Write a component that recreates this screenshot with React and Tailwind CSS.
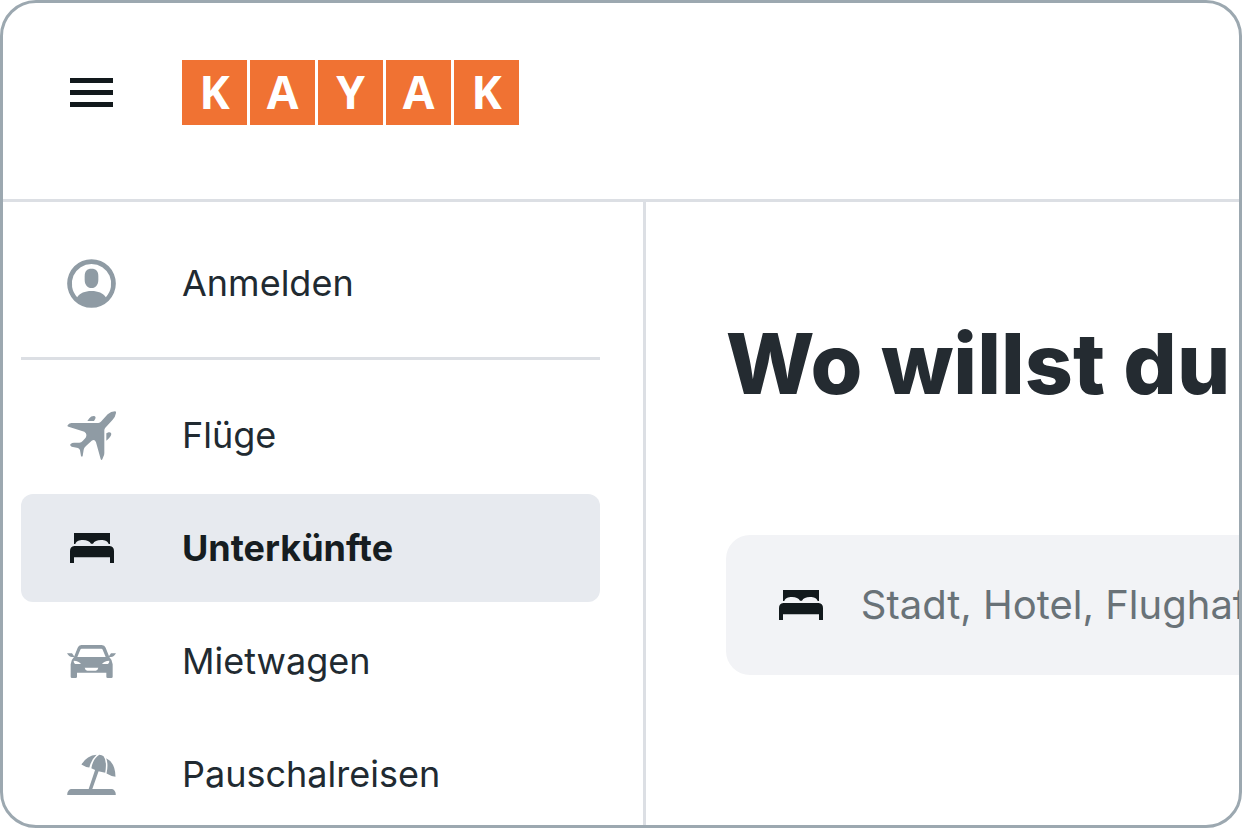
import React from 'react';

function UserIcon() {
  return (
    <svg viewBox="51 38 147 147" className="h-[49px] w-[49px]" fill="currentColor" aria-hidden="true">
      <path
        fillRule="evenodd"
        d="M124.500 38.500a73 73 0 1 0 0 146a73 73 0 1 0 0-146zM124.500 53a59 59 0 0 1 43 99.500c-8-12-23-18.500-43-18.500s-35 6.500-43 18.500a59 59 0 0 1 43-99.500z"
      />
      <path d="M124.500 67c14 0 20.500 8 20.500 22v11c0 15-8 25-20.500 25s-20.500-10-20.500-25V89c0-14 6.500-22 20.500-22z" />
    </svg>
  );
}

function PlaneIcon() {
  return (
    <svg viewBox="51 32 147 147" className="h-[49px] w-[49px]" fill="currentColor" aria-hidden="true">
      <path d="M52 76Q56 68 64 68L145 68Q150 68 154 63L173 42Q183 33 195 33Q199 33 198 38Q196 50 188 58L166 82Q163 86 163 90L163 158Q163 164 160 169L157 177Q154 181 152 176L138 126Q134 115 125 121L108 137Q102 142 101 148L98 167Q96 172 93 167L90 150Q89 145 84 143L65 139Q58 136 62 131Q66 127 72 127L88 127Q94 127 98 122L107 112Q113 100 103 94L58 80Q52 79 52 76z" />
      <path d="M112 62L118 54Q124 46 133 47Q139 49 136 55L132 62zM169 121V99L176 96Q184 95 184 101Q183 109 177 114z" />
    </svg>
  );
}

function BedIcon() {
  return (
    <svg viewBox="59 40 132 90" className="h-[30px] w-11" fill="currentColor" aria-hidden="true">
      <path d="M71 40h108v33h-4c-2-8-11-12-23-12c-12 0-20 4-24 11h-6c-4-7-12-11-24-11s-21 4-23 12h-4z" />
      <path d="M72 79h106q13 2 13 15v36h-12v-17H71v17H59V94q0-13 13-15z" />
    </svg>
  );
}

function CarIcon() {
  return (
    <svg viewBox="51 30 147 99" className="h-[33px] w-[49px]" fill="currentColor" aria-hidden="true">
      <path
        fillRule="evenodd"
        d="M94 30h61q9 0 12 8l11 28q10 10 10 22v37q0 4-4 4h-11q-4 0-4-4v-12H81v12q0 4-4 4H66q-4 0-4-4V88q0-12 10-22l11-28q3-8 11-8zM95 41q-3 0-4 3l-9 22h85l-9-22q-1-3-4-3zM71 77q0 10 8 10h14q-6-9-22-10zM178 77q-16 1-22 10h14q8 0 8-10zM104 98q2 9 8 9h25q6 0 8-9z"
      />
      <path d="M51 55h15l8 11h-8q-9 0-15-11zM198 55h-15l-8 11h8q9 0 15-11z" />
    </svg>
  );
}

function BeachIcon() {
  return (
    <svg viewBox="51 40 147 124" className="h-[41px] w-[49px]" fill="currentColor" aria-hidden="true">
      <path d="M94 72q16-28 46-30q-16 14-22 39q-12-1-24-9zM124 83q5-29 24-41q8 0 13 5q11 13 5 50q-22-2-42-14zM170 99q6-28-1-46q28 14 28 56q-14-2-27-10z" />
      <path d="M136 86l11 3-20 57h-11zM62 146h125q11 4 11 18H51q0-14 11-18z" />
    </svg>
  );
}

function NavItem({ icon, label, active }) {
  return (
    <a
      href="#"
      aria-current={active ? 'page' : undefined}
      className={
        active
          ? 'flex h-[108px] shrink-0 items-center gap-[66px] rounded-xl bg-[#e7eaef] pr-6 pl-[46px] font-bold text-[#161d21]'
          : 'flex h-[108px] shrink-0 items-center gap-[66px] rounded-xl pr-6 pl-[46px] text-[#212a31]'
      }
    >
      <span className={active ? 'flex w-[49px] justify-center text-[#12191c]' : 'flex w-[49px] justify-center text-[#8f9ba4]'}>
        {icon}
      </span>
      <span className="text-4xl">{label}</span>
    </a>
  );
}

const links = [
  { label: 'Flüge', icon: <PlaneIcon /> },
  { label: 'Unterkünfte', icon: <BedIcon />, active: true },
  { label: 'Mietwagen', icon: <CarIcon /> },
  { label: 'Pauschalreisen', icon: <BeachIcon /> },
];

export default function App() {
  return (
    <div className="h-screen bg-white font-['Inter',sans-serif]">
      <div className="flex h-full flex-col overflow-hidden rounded-[36px] border-[3px] border-[#9ca8b0] bg-white">
        <header className="flex shrink-0 items-start gap-[69px] border-b-[3px] border-[#dcdfe4] pt-[57px] pb-[74px] pl-[67px]">
          <button type="button" aria-label="Menü" className="flex h-[65px] w-[43px] flex-col justify-center gap-[7px]">
            <span className="h-[5px] w-full bg-[#12191c]" />
            <span className="h-[5px] w-full bg-[#12191c]" />
            <span className="h-[5px] w-full bg-[#12191c]" />
          </button>
          <a href="#" aria-label="KAYAK" className="flex gap-[3px] font-['Open_Sans',sans-serif] text-[46px] leading-none font-bold text-white">
            {['K', 'A', 'Y', 'A', 'K'].map((letter, i) => (
              <span key={i} className="flex h-[65px] w-[65px] items-center justify-center bg-[#f07233] pb-1">
                {letter}
              </span>
            ))}
          </a>
        </header>
        <div className="flex min-h-0 flex-1">
          <nav className="flex w-[52%] shrink-0 flex-col overflow-hidden border-r-[3px] border-[#dcdfe4] pt-[27px] pr-[43px] pl-[18px]">
            <NavItem icon={<UserIcon />} label="Anmelden" />
            <hr className="mt-5 mb-[21px] shrink-0 border-t-[3px] border-[#dcdfe4]" />
            <div className="flex flex-col gap-[5px]">
              {links.map((link) => (
                <NavItem key={link.label} {...link} />
              ))}
            </div>
          </nav>
          <main className="min-w-0 flex-1 overflow-hidden pt-[112px] pl-20">
            <h1 className="text-[84px] leading-[100px] font-extrabold whitespace-nowrap text-[#242b31]">Wo willst du</h1>
            <label className="mt-[121px] flex h-[140px] items-center gap-[38px] rounded-l-3xl bg-[#f2f3f6] pl-[53px] text-[#12191c]">
              <span className="shrink-0">
                <BedIcon />
              </span>
              <input
                type="text"
                aria-label="Reiseziel"
                placeholder="Stadt, Hotel, Flughafen"
                className="min-w-0 flex-1 bg-transparent text-[40px] outline-none placeholder:text-[#697278]"
              />
            </label>
          </main>
        </div>
      </div>
    </div>
  );
}
